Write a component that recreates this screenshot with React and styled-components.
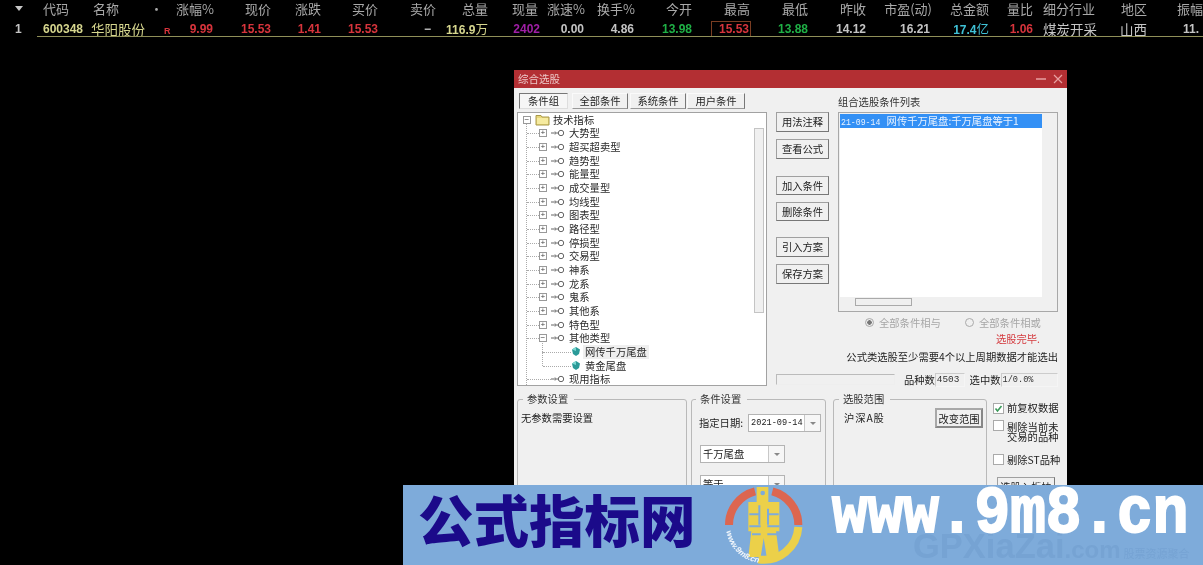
import React from "react";
import styled, { createGlobalStyle } from "styled-components";

const CJK = `"Noto Sans CJK SC", "Liberation Sans", sans-serif`;
const NUM = `"Liberation Sans", "Noto Sans CJK SC", sans-serif`;
const MONO = `"Liberation Mono", "Noto Sans CJK SC", monospace`;
const TRACKS = "36px 49px 65px 26px 38px 57px 50px 57px 58px 52px 52px 45px 50px 57px 58px 58px 58px 66px 57px 44px 64px 50px 56px";

const Global = createGlobalStyle`
  html, body { margin: 0; padding: 0; background: #000; }
  * { box-sizing: border-box; }
`;

const Page = styled.div`
  position: relative; width: 1203px; height: 565px; overflow: hidden;
  background: #000; font-family: ${CJK}; filter: blur(0.3px);
`;

/* quote table */
const QuoteRow = styled.div`
  display: grid; grid-template-columns: ${TRACKS}; align-items: center; white-space: nowrap;
`;
const HeadRow = styled(QuoteRow)`height: 18px;`;
const DataRow = styled(QuoteRow)`
  height: 19px; padding-top: 1px; position: relative;
  &::after { content: ""; position: absolute; left: 37px; right: 0; bottom: 0; height: 1px; background: #8f8f58; }
`;
const HeadCell = styled.div`
  color: #a9a9a9; font: 400 13px/16px ${CJK};
  text-align: ${p => p.$a || "right"};
  padding-left: ${p => p.$pl || 0}px; padding-right: ${p => p.$pr || 0}px;
`;
const ValCell = styled.div`
  color: ${p => p.$c || "#c4c4c4"}; font: 700 12px/16px ${NUM};
  text-align: ${p => p.$a || "right"};
  padding-left: ${p => p.$pl || 0}px; padding-right: ${p => p.$pr || 0}px;
`;
const CjkVal = styled(ValCell)`font: 400 13.5px/16px ${CJK};`;
const CjkUnit = styled.span`font: 400 12.5px/16px ${CJK};`;
const RedR = styled(ValCell)`font-size: 9px; padding-top: 4px;`;
const Boxed = styled.span`
  display: inline-block; border: 1px solid #7a3d22; padding: 0 1px 0 7px; height: 16px; width: 40px; margin-right: -1px;
  line-height: 14px;
`;
const Arrow = styled.div`
  width: 0; height: 0; border-left: 4px solid transparent; border-right: 4px solid transparent;
  border-top: 5px solid #c8c8c8; margin: 0 0 2px 15px;
`;

/* dialog */
const Dialog = styled.section`
  position: absolute; left: 514px; top: 70px; width: 553px; height: 430px;
  background: #f0f0f0; color: #222; font: 400 10.3px/14px ${CJK};
`;
const TitleBar = styled.header`
  display: flex; align-items: center; justify-content: space-between;
  height: 18px; background: #b32f33; padding: 0 4px; color: #ecc8c8; font-size: 10.5px;
`;
const Controls = styled.div`display: flex; gap: 7px; align-items: center;`;
const Body = styled.div`padding: 5px 9px 0 3px;`;
const TopRow = styled.div`display: flex;`;
const LeftCol = styled.div`width: 250px; margin-right: 9px;`;
const Tabs = styled.div`display: flex; height: 16px; padding-left: 2px; margin-bottom: 3px;`;
const Tab = styled.div`
  width: ${p => p.$w}px; margin-right: ${p => p.$m}px; text-align: center; line-height: 14px;
  background: ${p => p.$on ? "#f6f6f6" : "#f0f0f0"};
  border: 1px solid;
  border-color: ${p => p.$on ? "#777 #ddd #ddd #777" : "#fafafa #777 #999 #fafafa"};
`;
const Tree = styled.div`
  position: relative; height: 274px; background: #fff; border: 1px solid #a2a2a2; overflow: hidden;
  &::before { content: ""; position: absolute; left: 8px; top: 11px; bottom: 0; border-left: 1px dotted #aaa; }
`;
const TreeRow = styled.div`
  position: relative; display: flex; align-items: center; height: 13.67px; padding-left: ${p => p.$indent}px; color: #2a2a2a; white-space: nowrap;
`;
const BranchRow = styled(TreeRow)`
  &::before { content: ""; position: absolute; left: 9px; width: 12px; top: 50%; border-top: 1px dotted #aaa; }
`;
const BareRow = styled(TreeRow)`
  &::before { content: ""; position: absolute; left: 9px; width: 24px; top: 50%; border-top: 1px dotted #aaa; }
`;
const LeafRow = styled(TreeRow)`
  &::before { content: ""; position: absolute; left: 24px; top: -7px; height: 14px; border-left: 1px dotted #aaa; }
  &::after { content: ""; position: absolute; left: 25px; width: 28px; top: 50%; border-top: 1px dotted #aaa; }
`;
const Thumb = styled.div`
  position: absolute; left: 236px; top: 15px; width: 10px; height: 185px; background: #f0f0f0; border: 1px solid #c4c4c4;
`;
const Hl = styled.span`background: ${p => p.$on ? "#efefef" : "transparent"}; padding: 0 2px; margin-left: 3px;`;
const Expander = styled.span`
  display: inline-flex; width: 8px; height: 8px; border: 1px solid #999; align-items: center; justify-content: center;
  font: 400 8px/6px ${MONO}; color: #444; background: #fff; flex: none; position: relative; z-index: 1;
`;

const ButtonsCol = styled.div`width: 53px; margin-right: 9px; padding-top: 19px; display: flex; flex-direction: column;`;
const Btn = styled.div`
  width: ${p => p.$w || 53}px; height: ${p => p.$h || 19.5}px; margin-bottom: ${p => p.$mb || 0}px; margin-left: ${p => p.$ml || 0}px; text-align: center;
  line-height: ${p => (p.$h || 19.5) - 2}px; background: #f0f0f0; color: #222; white-space: nowrap;
  border: 1px solid #a0a0a0; border-right-color: #777; border-bottom-color: #777;
`;
const RightCol = styled.div`width: 220px;`;
const ListLabel = styled.div`height: 19px; line-height: 17px; color: #333;`;
const ListBox = styled.div`position: relative; height: 200px; border: 1px solid #a8a8a8; padding: 1px 15px 14px 1px; background: #f0f0f0;`;
const ListInner = styled.div`height: 100%; background: #fff;`;
const ListSel = styled.div`height: 14px; line-height: 13px; background: #3390f5; color: #e8f2ff; padding-left: 1px; white-space: nowrap;`;
const ListDate = styled.span`font: 400 8.2px/13px ${MONO}; margin-right: 4px;`;
const Mono = styled.span`font: 400 8.6px/13px ${MONO};`;
const HScroll = styled.div`position: absolute; left: 16px; bottom: 5px; width: 57px; height: 8px; background: #f0f0f0; border: 1px solid #aaa;`;
const RadioRow = styled.div`display: flex; height: 21px; align-items: center; padding-left: 27px; color: #a6a6a6;`;
const Radio = styled.span`
  width: 9px; height: 9px; border-radius: 50%; border: 1px solid #aaa; background: ${p => p.$on ? "radial-gradient(circle,#777 0 2px,#eee 2.5px)" : "#f0f0f0"};
  margin-right: ${p => p.$mr}px; flex: none;
`;
const RadioText = styled.span`width: ${p => p.$w}px; flex: none;`;
const DoneRow = styled.div`color: #d43a3e; text-align: right; padding-right: 18px; height: 12px; line-height: 12px;`;
const NoteRow = styled.div`text-align: right; color: #222; margin-top: 5px; height: 14px; white-space: nowrap;`;
const StatusRow = styled.div`display: flex; width: 282px; margin-left: -62px; margin-top: 9px; height: 13px; align-items: center; white-space: nowrap;`;
const Progress = styled.div`width: 120px; height: 11px; border: 1px solid #bbb; border-right-color: #eee; border-bottom-color: #eee; margin-right: 9px;`;
const Field = styled.div`
  width: ${p => p.$w}px; height: 14px; margin-right: ${p => p.$m || 0}px; border: 1px solid #ccc; border-right-color: #f5f5f5; border-bottom-color: #f5f5f5;
  font: 400 ${p => p.$fs}px/12px ${MONO}; padding-left: 1px; color: #333;
`;
const BottomRow = styled.div`display: flex; margin-top: 6px; align-items: flex-start;`;
const Group = styled.fieldset`
  width: ${p => p.$w}px; height: 108px; margin: 0 ${p => p.$m}px 0 0; padding: ${p => p.$pt || 5}px 3px 0 ${p => p.$pl || 3}px;
  border: 1px solid #b9b9b9; border-radius: 3px; min-width: 0;
`;
const Legend = styled.legend`padding: 0 6px 0 4px; margin-left: ${p => p.$ml}px; line-height: 14px; color: #333; font-size: 10.3px;`;
const FormRow = styled.div`display: flex; align-items: center; margin-bottom: ${p => p.$mb || 0}px; white-space: nowrap;`;
const Select = styled.div`
  display: flex; width: ${p => p.$w}px; height: 18px; margin-left: ${p => p.$ml || 0}px; background: #fff; border: 1px solid #b4b4b4;
  align-items: center; padding-left: 2px; justify-content: space-between; flex: none;
`;
const SelArrow = styled.span`
  width: 16px; height: 100%; border-left: 1px solid #c8c8c8; background: #f6f6f6; display: flex; align-items: center; justify-content: center;
  &::after { content: ""; border-left: 3px solid transparent; border-right: 3px solid transparent; border-top: 3px solid #888; }
`;
const ScopeRow = styled.div`display: flex; justify-content: space-between; padding: 0 0 0 7px; line-height: 14px;`;
const ScopeLabel = styled.span`margin-top: 3px; letter-spacing: 0.9px;`;
const ScopeBtn = styled(Btn)`border: 2px solid #a8a8a8; border-right-color: #888; border-bottom-color: #888;`;
const ChecksCol = styled.div`width: 66px; padding-top: 11px;`;
const CheckRow = styled.div`display: flex; align-items: flex-start; margin-bottom: ${p => p.$mb}px;`;
const Box = styled.span`
  width: 11px; height: 11px; border: 1px solid #aaa; background: #fff; flex: none; margin: 0 3px 0 1px;
  display: flex; align-items: center; justify-content: center;
`;
const CheckText = styled.span`line-height: 10px; white-space: pre; margin-top: ${p => p.$mt || 0}px;`;

/* banner */
const Banner = styled.aside`
  position: absolute; left: 403px; top: 485px; width: 800px; height: 80px; background: #7eabda;
  display: flex; align-items: flex-start; padding-left: 15px; overflow: hidden;
`;
const BrandCn = styled.div`
  width: 280px; font: 900 55.5px/60px ${CJK}; color: #1b0a8a; margin-top: 3px; white-space: nowrap;
`;
const Logo = styled.svg`width: 90px; height: 80px; margin-left: 22px; flex: none;`;
const BrandEn = styled.div`
  position: relative; z-index: 1; margin-left: 22px; width: 356px; font: 700 59.4px/60px "Liberation Mono", monospace; color: #fff; white-space: nowrap;
  -webkit-text-stroke: 1.8px #fff; transform: scaleY(1.12); transform-origin: 0 62%; margin-top: 1px;
`;
const Watermark = styled.div`
  position: absolute; left: 510px; top: 45px; color: #76a3d3; white-space: nowrap; display: flex; align-items: baseline;
  font: 700 34.5px/32px "Liberation Sans", sans-serif;
`;
const WmMid = styled.span`font: 700 24px/22px "Liberation Sans", sans-serif; margin-right: 3px;`;
const WmSmall = styled.span`font: 400 11px/14px ${CJK};`;

const heads = [
  ["代码", { a: "left", pl: 7 }], ["名称", { a: "left", pl: 8 }], ["•", { a: "left", pl: 0 }],
  ["涨幅%"], ["现价"], ["涨跌"], ["买价"], ["卖价"], ["总量"], ["现量", { pr: 2 }], ["涨速%"], ["换手%"],
  ["今开"], ["最高"], ["最低"], ["昨收"], ["市盈(动)"], ["总金额"], ["量比"], ["细分行业", { a: "left", pl: 10 }], ["地区"], ["振幅", { a: "left", pl: 30 }],
];

const RED = "#d7343c", YEL = "#d6d68e", GRN = "#1fb046", WHT = "#c6c6c6";
const Key = ({ left = 4 }) => (
  <svg width="14" height="8" viewBox="0 0 14 8" style={{ margin: `0 4px 0 ${left}px`, flex: "none" }}>
    <path d="M0 4h3M4 2.5v3M4 4h4" stroke="#666" fill="none" />
    <circle cx="10" cy="4" r="2.7" stroke="#666" fill="#fff" />
  </svg>
);
const Gem = () => (
  <svg width="8" height="9" viewBox="0 0 8 9" style={{ flex: "none", position: "relative", zIndex: 1 }}>
    <path d="M4 0 8 2.5 7 7 4 9 1 7 0 2.5Z" fill="#2a9a98" />
    <path d="M0 2.5 4 0 4 4Z" fill="#7ad7d0" />
  </svg>
);
const Folder = () => (
  <svg width="15" height="12" viewBox="0 0 15 12" style={{ margin: "0 3px 0 4px", flex: "none" }}>
    <path d="M1 3V1.5h5L7 3h7v8H1Z" fill="#e8d77a" stroke="#a8984a" />
    <rect x="2" y="4" width="11" height="6" fill="#f6eba0" />
  </svg>
);

const groups = ["大势型", "超买超卖型", "趋势型", "能量型", "成交量型", "均线型", "图表型", "路径型", "停损型", "交易型", "神系", "龙系", "鬼系", "其他系", "特色型"];

function Logomark() {
  return (
    <Logo viewBox="0 9 270 240" aria-hidden="true">
      <path d="M27 129A104 104 0 0 1 105 28M157 28A104 104 0 0 1 235 129" fill="none" stroke="#dc6650" strokeWidth="24" />
      <path d="M235 135A104 104 0 0 1 115 232" fill="none" stroke="#ecd049" strokeWidth="24" />
      <path d="M110 15H145V60H178V148H168L178 225H140L131 168L122 225H85L94 148H85V60H110Z" fill="#ecd049" />
      <circle cx="128" cy="33" r="7" fill="#7eabda" />
      <path d="M118 70V128M144 80V128M88 97H118M146 97H176M88 133H122M142 133H178M96 157H122M142 157H172" stroke="#7eabda" strokeWidth="6" fill="none" />
      <path id="lg" d="M19 148A114 114 0 0 0 115 242" fill="none" />
      <text fontFamily="Liberation Sans, sans-serif" fontStyle="italic" fontWeight="700" fontSize="24" fill="#f4f8fc">
        <textPath href="#lg">www.9m8.cn</textPath>
      </text>
    </Logo>
  );
}

export default function App() {
  return (
    <Page>
      <Global />
      <HeadRow>
        <Arrow />
        {heads.map(([t, o = {}], i) => (
          <HeadCell key={i} $a={o.a} $pl={o.pl} $pr={o.pr}>{t}</HeadCell>
        ))}
      </HeadRow>
      <DataRow>
        <ValCell $a="left" $pl={15}>1</ValCell>
        <ValCell $a="left" $pl={7} $c={YEL}>600348</ValCell>
        <CjkVal $a="left" $pl={6} $c={YEL}>华阳股份</CjkVal>
        <RedR $a="left" $pl={14} $c={RED}>R</RedR>
        <ValCell $c={RED} $pr={1}>9.99</ValCell>
        <ValCell $c={RED}>15.53</ValCell>
        <ValCell $c={RED}>1.41</ValCell>
        <ValCell $c={RED}>15.53</ValCell>
        <ValCell $pr={5}>−</ValCell>
        <ValCell $c={YEL}>116.9<CjkUnit>万</CjkUnit></ValCell>
        <ValCell $c="#a01fa6">2402</ValCell>
        <ValCell $pr={1}>0.00</ValCell>
        <ValCell $pr={1}>4.86</ValCell>
        <ValCell $c={GRN}>13.98</ValCell>
        <ValCell $c={RED}><Boxed>15.53</Boxed></ValCell>
        <ValCell $c={GRN}>13.88</ValCell>
        <ValCell>14.12</ValCell>
        <ValCell $pr={2}>16.21</ValCell>
        <ValCell $c="#3fc1d6">17.4<CjkUnit>亿</CjkUnit></ValCell>
        <ValCell $c={RED}>1.06</ValCell>
        <CjkVal $a="left" $pl={10} $c={WHT}>煤炭开采</CjkVal>
        <CjkVal $c={WHT}>山西</CjkVal>
        <ValCell $a="left" $pl={36}>11.</ValCell>
      </DataRow>

      <Dialog>
        <TitleBar>
          <span>综合选股</span>
          <Controls>
            <svg width="10" height="10" viewBox="0 0 10 10"><path d="M0 5h10" stroke="#e7a1a1" strokeWidth="1.5" /></svg>
            <svg width="10" height="10" viewBox="0 0 10 10"><path d="M1 1l8 8M9 1l-8 8" stroke="#e7a1a1" strokeWidth="1.2" /></svg>
          </Controls>
        </TitleBar>
        <Body>
          <TopRow>
            <LeftCol>
              <Tabs>
                <Tab $on $w={49} $m={4}>条件组</Tab>
                <Tab $w={56} $m={2}>全部条件</Tab>
                <Tab $w={56} $m={1}>系统条件</Tab>
                <Tab $w={58} $m={0}>用户条件</Tab>
              </Tabs>
              <Tree>
                <TreeRow $indent={5}><Expander>−</Expander><Folder />技术指标</TreeRow>
                {groups.map(g => (
                  <BranchRow key={g} $indent={21}><Expander>+</Expander><Key />{g}</BranchRow>
                ))}
                <BranchRow $indent={21}><Expander>−</Expander><Key />其他类型</BranchRow>
                <LeafRow $indent={54}><Gem /><Hl $on>网传千万尾盘</Hl></LeafRow>
                <LeafRow $indent={54}><Gem /><Hl>黄金尾盘</Hl></LeafRow>
                <BareRow $indent={33}><Key left={0} />现用指标</BareRow>
                <Thumb />
              </Tree>
            </LeftCol>
            <ButtonsCol>
              <Btn $mb={7.5}>用法注释</Btn>
              <Btn $mb={17}>查看公式</Btn>
              <Btn $mb={6.5}>加入条件</Btn>
              <Btn $mb={16}>删除条件</Btn>
              <Btn $mb={7.5}>引入方案</Btn>
              <Btn>保存方案</Btn>
            </ButtonsCol>
            <RightCol>
              <ListLabel>组合选股条件列表</ListLabel>
              <ListBox>
                <ListInner>
                  <ListSel><ListDate>21-09-14</ListDate> 网传千万尾盘:千万尾盘等于1</ListSel>
                </ListInner>
                <HScroll />
              </ListBox>
              <RadioRow>
                <Radio $on $mr={5} />
                <RadioText $w={86}>全部条件相与</RadioText>
                <Radio $mr={5} />
                <RadioText $w={64}>全部条件相或</RadioText>
              </RadioRow>
              <DoneRow>选股完毕.</DoneRow>
              <NoteRow>公式类选股至少需要4个以上周期数据才能选出</NoteRow>
              <StatusRow>
                <Progress />
                <span>品种数</span>
                <Field $w={30} $m={5} $fs={9.4}>4503</Field>
                <span>选中数</span>
                <Field $w={58} $fs={8.6}>1/0.0%</Field>
              </StatusRow>
            </RightCol>
          </TopRow>
          <BottomRow>
            <Group $w={170} $m={4}>
              <Legend $ml={2}>参数设置</Legend>
              无参数需要设置
            </Group>
            <Group $w={135} $m={7} $pl={7} $pt={8}>
              <Legend $ml={-3}>条件设置</Legend>
              <FormRow $mb={13}>指定日期:<Select $w={73} $ml={5}><Mono>2021-09-14</Mono><SelArrow /></Select></FormRow>
              <FormRow $mb={12}><Select $w={85} $ml={1}>千万尾盘<SelArrow /></Select></FormRow>
              <FormRow><Select $w={85} $ml={1}>等于<SelArrow /></Select></FormRow>
            </Group>
            <Group $w={154} $m={5} $pl={3} $pt={2}>
              <Legend $ml={2}>选股范围</Legend>
              <ScopeRow><ScopeLabel>沪深A股</ScopeLabel><ScopeBtn $w={48} $h={20}>改变范围</ScopeBtn></ScopeRow>
            </Group>
            <ChecksCol>
              <CheckRow $mb={6}>
                <Box><svg width="9" height="9" viewBox="0 0 9 9"><path d="M1.5 4.5 3.5 7 7.5 2" stroke="#3c9a5a" strokeWidth="1.6" fill="none" /></svg></Box>
                <CheckText>前复权数据</CheckText>
              </CheckRow>
              <CheckRow $mb={12}>
                <Box />
                <CheckText $mt={2}>{"剔除当前未\n交易的品种"}</CheckText>
              </CheckRow>
              <CheckRow $mb={12}>
                <Box />
                <CheckText $mt={1}>剔除ST品种</CheckText>
              </CheckRow>
              <Btn $w={58} $h={20} $ml={5}>选股入板块</Btn>
            </ChecksCol>
          </BottomRow>
        </Body>
      </Dialog>

      <Banner>
        <BrandCn>公式指标网</BrandCn>
        <Logomark />
        <BrandEn>www.9m8.cn</BrandEn>
        <Watermark>GPXiaZai<WmMid>.com</WmMid><WmSmall>股票资源聚合</WmSmall></Watermark>
      </Banner>
    </Page>
  );
}
